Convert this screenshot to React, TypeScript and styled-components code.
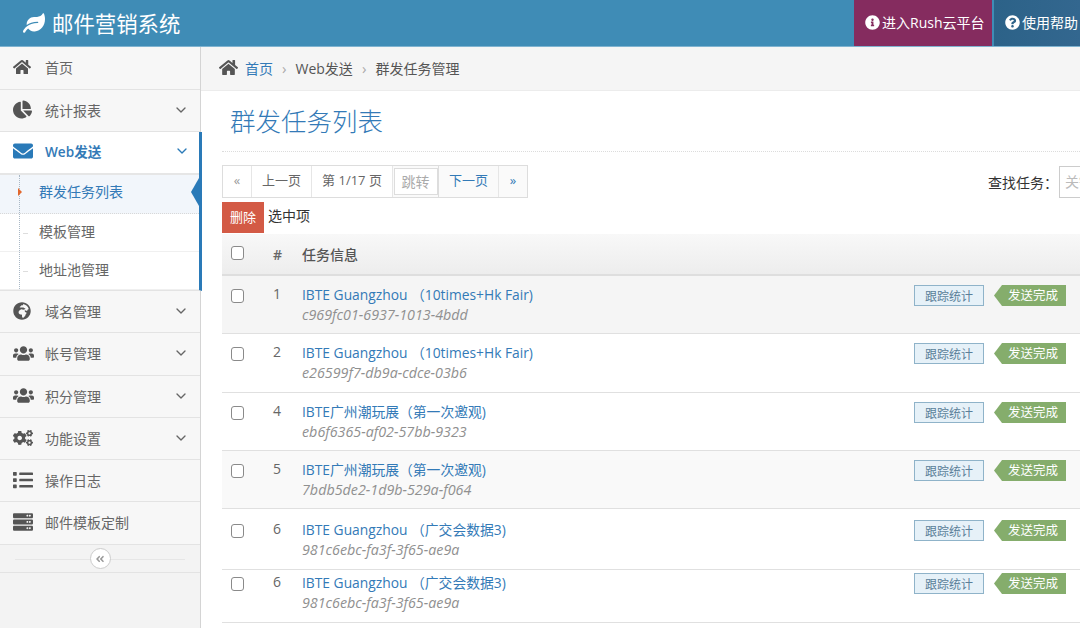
import styled, { createGlobalStyle } from 'styled-components';
import {
  FaAngleDoubleLeft,
  FaChartPie,
  FaCogs,
  FaEnvelope,
  FaGlobeAfrica,
  FaHome,
  FaInfoCircle,
  FaLeaf,
  FaList,
  FaQuestionCircle,
  FaServer,
  FaUsers,
} from 'react-icons/fa';
import { FiChevronDown } from 'react-icons/fi';
import type { ReactNode } from 'react';

const FONT = '"Open Sans", "Noto Sans CJK SC", sans-serif';

const GlobalStyle = createGlobalStyle`
  html, body {
    margin: 0;
    width: 1080px;
    height: 628px;
    overflow: hidden;
    font-family: ${FONT};
    color: #555;
    background: #fff;
  }
  * {
    box-sizing: border-box;
  }
`;

type MenuEntry = { icon: ReactNode; label: string; arrow?: boolean; height: number; size: number };

const menuTop: MenuEntry[] = [
  { icon: <FaHome />, label: '首页', height: 43, size: 18 },
  { icon: <FaChartPie />, label: '统计报表', arrow: true, height: 42, size: 19 },
];

const menuBottom: MenuEntry[] = [
  { icon: <FaGlobeAfrica />, label: '域名管理', arrow: true, height: 42, size: 18 },
  { icon: <FaUsers />, label: '帐号管理', arrow: true, height: 43, size: 21 },
  { icon: <FaUsers />, label: '积分管理', arrow: true, height: 42, size: 21 },
  { icon: <FaCogs />, label: '功能设置', arrow: true, height: 42, size: 20 },
  { icon: <FaList />, label: '操作日志', height: 42, size: 20 },
  { icon: <FaServer />, label: '邮件模板定制', height: 43, size: 20 },
];

const tasks = [
  { no: 1, title: 'IBTE Guangzhou （10times+Hk Fair)', uuid: 'c969fc01-6937-1013-4bdd', height: 58, top: 10, bg: '#f5f5f5' },
  { no: 2, title: 'IBTE Guangzhou （10times+Hk Fair)', uuid: 'e26599f7-db9a-cdce-03b6', height: 59, top: 10, bg: '#fff' },
  { no: 4, title: 'IBTE广州潮玩展（第一次邀观)', uuid: 'eb6f6365-af02-57bb-9323', height: 58, top: 10, bg: '#fff' },
  { no: 5, title: 'IBTE广州潮玩展（第一次邀观)', uuid: '7bdb5de2-1d9b-529a-f064', height: 58, top: 10, bg: '#f9f9f9' },
  { no: 6, title: 'IBTE Guangzhou （广交会数据3)', uuid: '981c6ebc-fa3f-3f65-ae9a', height: 61, top: 12, bg: '#fff' },
  { no: 6, title: 'IBTE Guangzhou （广交会数据3)', uuid: '981c6ebc-fa3f-3f65-ae9a', height: 53, top: 4, bg: '#fff' },
];

const App = () => {
  return (
    <Page>
      <GlobalStyle />
      <Header>
        <Brand>
          <FaLeaf />
          邮件营销系统
        </Brand>
        <HeaderLink $bg="#852c5f" $width={138}>
          <FaInfoCircle />
          进入Rush云平台
        </HeaderLink>
        <HeaderLink $bg="linear-gradient(90deg, #2c6288, #33678f)" $width={86}>
          <FaQuestionCircle />
          使用帮助
        </HeaderLink>
      </Header>
      <Body>
        <Sidebar>
          {menuTop.map((item) => (
            <MenuItem key={item.label} $height={item.height}>
              <MenuIcon $size={item.size}>{item.icon}</MenuIcon>
              <MenuLabel>{item.label}</MenuLabel>
              {item.arrow && <FiChevronDown />}
            </MenuItem>
          ))}
          <ActiveGroup>
            <ActiveItem>
              <MenuIcon $size={20}>
                <FaEnvelope />
              </MenuIcon>
              <MenuLabel>Web发送</MenuLabel>
              <FiChevronDown />
            </ActiveItem>
            <SubCurrent>
              <CurrentDot />
              群发任务列表
              <SubPointer />
            </SubCurrent>
            <SubItem>模板管理</SubItem>
            <SubItem>地址池管理</SubItem>
          </ActiveGroup>
          {menuBottom.map((item) => (
            <MenuItem key={item.label} $height={item.height}>
              <MenuIcon $size={item.size}>{item.icon}</MenuIcon>
              <MenuLabel>{item.label}</MenuLabel>
              {item.arrow && <FiChevronDown />}
            </MenuItem>
          ))}
          <Collapse>
            <CollapseButton>
              <FaAngleDoubleLeft />
            </CollapseButton>
          </Collapse>
        </Sidebar>
        <Main>
          <Breadcrumb>
            <FaHome />
            <CrumbLink>首页</CrumbLink>
            <CrumbSep>›</CrumbSep>
            Web发送
            <CrumbSep>›</CrumbSep>
            群发任务管理
          </Breadcrumb>
          <Content>
            <PageTitle>群发任务列表</PageTitle>
            <Toolbar>
              <Pager>
                <PageCell $width={29} $color="#999">«</PageCell>
                <PageCell $width={60}>上一页</PageCell>
                <PageCell $width={81}>第 1/17 页</PageCell>
                <JumpCell>
                  <JumpButton>跳转</JumpButton>
                </JumpCell>
                <PageCell $width={60} $color="#337ab7" $bg="#fafafa">下一页</PageCell>
                <PageCell $width={28} $color="#337ab7" $bg="#fafafa">»</PageCell>
              </Pager>
              <Search>
                查找任务：
                <SearchInput placeholder="关键词" />
              </Search>
            </Toolbar>
            <BulkBar>
              <DeleteButton>删除</DeleteButton>
              选中项
            </BulkBar>
            <TableHead>
              <CheckBox type="checkbox" />
              <NoCell $bold>#</NoCell>
              <HeadTitle>任务信息</HeadTitle>
            </TableHead>
            {tasks.map((task, i) => (
              <TaskRow key={i} $height={task.height} $top={task.top} $bg={task.bg}>
                <CheckBox type="checkbox" />
                <NoCell>{task.no}</NoCell>
                <TaskInfo>
                  <TaskTitle>{task.title}</TaskTitle>
                  <TaskId>{task.uuid}</TaskId>
                </TaskInfo>
                <TrackTag>跟踪统计</TrackTag>
                <DoneBadge>发送完成</DoneBadge>
              </TaskRow>
            ))}
          </Content>
        </Main>
      </Body>
    </Page>
  );
};

const Page = styled.div`
  width: 1080px;
  height: 628px;
  overflow: hidden;
  display: flex;
  flex-direction: column;
`;

const Header = styled.header`
  height: 47px;
  flex-shrink: 0;
  display: flex;
  background: #3f8cb6;
  border-bottom: 1px solid #7fb3d0;
`;

const Brand = styled.div`
  flex: 1;
  display: flex;
  align-items: center;
  gap: 7px;
  padding: 0 0 1px 23px;
  color: #fff;
  font-size: 21.4px;
  svg {
    font-size: 22px;
    flex-shrink: 0;
  }
`;

const HeaderLink = styled.a<{ $bg: string; $width: number }>`
  width: ${(p) => p.$width}px;
  flex-shrink: 0;
  margin-left: 2px;
  display: flex;
  align-items: center;
  gap: 2px;
  padding: 0 0 2px 11px;
  background: ${(p) => p.$bg};
  color: #fff;
  font-size: 14px;
  white-space: nowrap;
  svg {
    font-size: 15px;
    flex-shrink: 0;
  }
`;

const Body = styled.div`
  flex: 1;
  display: flex;
  min-height: 0;
`;

const Sidebar = styled.aside`
  width: 201px;
  flex-shrink: 0;
  background: #f3f3f3;
  border-right: 1px solid #d4d4d4;
  position: relative;
`;

const MenuItem = styled.div<{ $height: number }>`
  height: ${(p) => p.$height}px;
  display: flex;
  align-items: center;
  padding: 0 11px 2px 13px;
  background: #f7f7f7;
  border-bottom: 1px solid #e3e3e3;
  color: #666;
  font-size: 14px;
  > svg {
    font-size: 16px;
    color: #666;
  }
`;

const MenuIcon = styled.span<{ $size: number }>`
  width: 32px;
  display: flex;
  align-items: center;
  color: #555;
  font-size: ${(p) => p.$size}px;
`;

const MenuLabel = styled.span`
  flex: 1;
`;

const ActiveGroup = styled.div`
  height: 159px;
  margin-right: -2px;
  border-right: 3px solid #2a7ab8;
  border-bottom: 1px solid #e3e3e3;
  background: #fff;
  position: relative;
  z-index: 1;
`;

const ActiveItem = styled.div`
  height: 43px;
  display: flex;
  align-items: center;
  padding: 0 9px 3px 13px;
  border-bottom: 2px solid #e6e6e6;
  color: #337ab7;
  font-size: 13.6px;
  font-weight: 600;
  svg {
    color: #2a7ab8;
  }
  > svg {
    font-size: 16px;
  }
`;

const SubItem = styled.div`
  height: 38px;
  display: flex;
  align-items: center;
  padding: 0 0 3px 39px;
  font-size: 14px;
  color: #666;
  background: #fff;
  border-bottom: 1px solid #f0f0f0;
  position: relative;
  &::before {
    content: '';
    position: absolute;
    left: 19px;
    top: 0;
    bottom: 0;
    border-left: 1px dotted #a9b8c6;
  }
  &::after {
    content: '';
    position: absolute;
    left: 23px;
    top: 50%;
    width: 5px;
    border-top: 1px solid #ddd;
  }
`;

const SubCurrent = styled(SubItem)`
  height: 39px;
  padding-bottom: 6px;
  background: #f2f6fb;
  color: #337ab7;
  border-bottom: 1px dotted #d8d8d8;
  &::after {
    display: none;
  }
`;

const CurrentDot = styled.i`
  position: absolute;
  left: 18px;
  top: 13px;
  width: 0;
  height: 0;
  border-left: 4px solid #e2672c;
  border-top: 4px solid transparent;
  border-bottom: 4px solid transparent;
  z-index: 1;
`;

const SubPointer = styled.i`
  position: absolute;
  right: 0;
  top: 3px;
  width: 0;
  height: 0;
  border-right: 8px solid #2a7ab8;
  border-top: 14px solid transparent;
  border-bottom: 14px solid transparent;
`;

const Collapse = styled.div`
  height: 28px;
  display: flex;
  align-items: center;
  justify-content: center;
  border-bottom: 1px solid #e3e3e3;
  position: relative;
  &::before {
    content: '';
    position: absolute;
    left: 15px;
    right: 15px;
    top: 14px;
    border-top: 1px solid #e6e6e6;
  }
`;

const CollapseButton = styled.span`
  width: 21px;
  height: 21px;
  border-radius: 50%;
  border: 1px solid #ccc;
  background: #fff;
  display: flex;
  align-items: center;
  justify-content: center;
  position: relative;
  color: #999;
  font-size: 10px;
`;

const Main = styled.main`
  flex: 1;
  min-width: 0;
  display: flex;
  flex-direction: column;
`;

const Breadcrumb = styled.div`
  height: 44px;
  flex-shrink: 0;
  display: flex;
  align-items: center;
  padding: 0 0 2px 18px;
  background: #f5f5f5;
  border-bottom: 1px solid #ececec;
  font-size: 14px;
  color: #555;
  svg {
    font-size: 19px;
    margin-right: 7px;
  }
`;

const CrumbLink = styled.a`
  color: #337ab7;
`;

const CrumbSep = styled.span`
  margin: 0 9px;
  color: #aaa;
  font-size: 15px;
`;

const Content = styled.div`
  padding: 0 0 0 21px;
`;

const PageTitle = styled.h1`
  height: 61px;
  margin: 0 0 13px;
  padding: 13px 0 0 8px;
  border-bottom: 1px dotted #dcdcdc;
  color: #337ab7;
  font-size: 25.5px;
  font-weight: 300;
  line-height: 34px;
`;

const Toolbar = styled.div`
  height: 33px;
  display: flex;
  justify-content: space-between;
  align-items: center;
`;

const Pager = styled.div`
  display: flex;
  height: 33px;
  border: 1px solid #ddd;
  font-size: 13px;
`;

const PageCell = styled.span<{ $width: number; $color?: string; $bg?: string }>`
  width: ${(p) => p.$width}px;
  padding-bottom: 4px;
  display: flex;
  align-items: center;
  justify-content: center;
  color: ${(p) => p.$color ?? '#666'};
  background: ${(p) => p.$bg ?? '#fff'};
  border-right: 1px solid #e6e6e6;
  &:last-child {
    border-right: 0;
  }
`;

const JumpCell = styled.span`
  width: 46px;
  display: flex;
  align-items: center;
  justify-content: center;
  border-right: 1px solid #ddd;
  background: #fafafa;
`;

const JumpButton = styled.span`
  width: 44px;
  height: 27px;
  padding-bottom: 2px;
  display: flex;
  align-items: center;
  justify-content: center;
  border: 1px solid #ddd;
  background: #fff;
  color: #aaa;
  font-size: 14px;
`;

const Search = styled.label`
  display: flex;
  align-items: center;
  font-size: 14px;
  color: #333;
`;

const SearchInput = styled.input`
  width: 120px;
  height: 32px;
  margin-right: -99px;
  margin-left: 1px;
  padding: 0 5px;
  border: 1px solid #ccc;
  font-size: 14px;
  font-family: ${FONT};
  &::placeholder {
    color: #bbb;
  }
`;

const BulkBar = styled.div`
  height: 36px;
  padding-top: 4px;
  display: flex;
  align-items: flex-start;
  gap: 4px;
  font-size: 14px;
  color: #333;
  line-height: 28px;
`;

const DeleteButton = styled.span`
  width: 42px;
  height: 31px;
  padding-bottom: 2px;
  display: flex;
  align-items: center;
  justify-content: center;
  background: #d35a45;
  color: #fff;
  font-size: 13px;
`;

const CheckBox = styled.input`
  width: 13px;
  height: 14px;
  margin: 0 0 0 9px;
  flex-shrink: 0;
  appearance: none;
  border: 1px solid #8a8a8a;
  border-radius: 3px;
  background: #fff;
`;

const TableHead = styled.div`
  height: 42px;
  display: flex;
  align-items: center;
  background: linear-gradient(#f8f8f8, #ededed);
  border-bottom: 2px solid #dedede;
  font-size: 14px;
  color: #555;
  margin-right: -1px;
  ${CheckBox} {
    margin-top: -3px;
  }
`;

const NoCell = styled.span<{ $bold?: boolean }>`
  width: 58px;
  flex-shrink: 0;
  padding-left: 29px;
  font-size: 14px;
  font-weight: ${(p) => (p.$bold ? 600 : 400)};
  color: #666;
`;

const HeadTitle = styled.span`
  font-weight: 500;
`;

const TaskRow = styled.div<{ $height: number; $top: number; $bg: string }>`
  height: ${(p) => p.$height}px;
  display: flex;
  align-items: flex-start;
  padding: ${(p) => p.$top}px 14px 0 0;
  background: ${(p) => p.$bg};
  border-bottom: 1px solid #e0e0e0;
  ${CheckBox} {
    margin-top: 3px;
  }
  ${NoCell} {
    line-height: 16px;
  }
`;

const TaskInfo = styled.div`
  flex: 1;
  min-width: 0;
`;

const TaskTitle = styled.a`
  display: block;
  color: #337ab7;
  font-size: 13.8px;
  line-height: 18px;
`;

const TaskId = styled.span`
  display: block;
  margin-top: 2px;
  color: #909090;
  font-size: 14.3px;
  font-style: italic;
  line-height: 18px;
`;

const TrackTag = styled.span`
  width: 70px;
  height: 21px;
  margin-top: -1px;
  display: flex;
  align-items: center;
  justify-content: center;
  border: 1px solid #8fb3c9;
  background: #e6f1f8;
  color: #5b7f99;
  font-size: 12px;
`;

const DoneBadge = styled.span`
  width: 72px;
  height: 21px;
  margin: -1px 0 0 10px;
  padding: 0 0 2px 6px;
  display: flex;
  align-items: center;
  justify-content: center;
  background: #85ad6c;
  color: #fff;
  font-size: 12.5px;
  clip-path: polygon(8px 0, 100% 0, 100% 100%, 8px 100%, 0 50%);
`;

export default App;
